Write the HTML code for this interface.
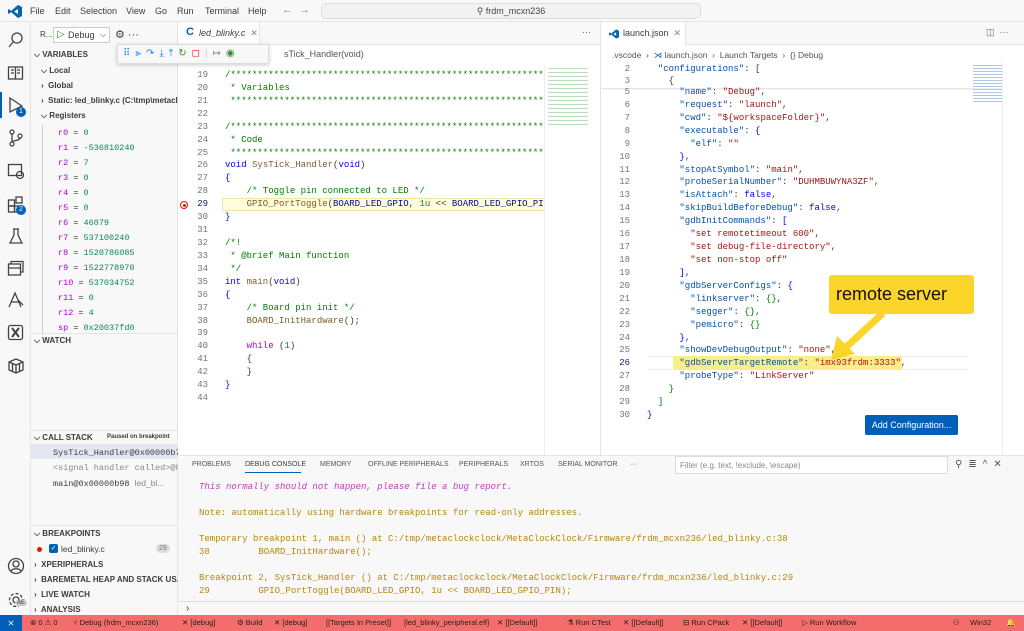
<!DOCTYPE html>
<html><head><meta charset="utf-8"><style>
*{margin:0;padding:0;box-sizing:border-box}
body{width:1024px;height:631px;overflow:hidden;background:#f8f8f8;font-family:"Liberation Sans",sans-serif;font-size:9px;color:#3b3b3b;position:relative}
.a{position:absolute;white-space:pre}
.m{font-family:"Liberation Mono",monospace;font-size:9px}
.ln{position:absolute;width:30px;text-align:right;color:#6e7681;font-family:"Liberation Mono",monospace;font-size:9px}
.c{color:#008000}.k{color:#0000ff}.f{color:#795e26}.v{color:#001080}.n{color:#098658}.s{color:#a31515}.j{color:#0451a5}.p{color:#af00db}
.hd{font-weight:bold;font-size:8px;color:#3b3b3b}
.ic{position:absolute;stroke:#424242;fill:none;stroke-width:1.3}
.mn{position:absolute;top:6px;font-size:9px}
.pt{position:absolute;top:461px;font-size:7px;color:#555;white-space:pre}
.sb{position:absolute;top:618px;font-size:7.5px;color:#222;white-space:pre}
</style></head><body>
<div class="a" style="left:0;top:0;width:1024px;height:22px;background:#f8f8f8;border-bottom:1px solid #e5e5e5"></div>
<svg class="a" style="left:8px;top:5px" width="14" height="13" viewBox="0 0 14 13"><path d="M10 0L14 2V11L10 13L3 7L1 9L0 8V5L1 4L3 6L10 0ZM10 4L6 6.5L10 9Z" fill="#0065a9"/></svg>
<span class="mn" style="left:30px">File</span><span class="mn" style="left:55px">Edit</span><span class="mn" style="left:80px">Selection</span><span class="mn" style="left:126px">View</span><span class="mn" style="left:155px">Go</span><span class="mn" style="left:177px">Run</span><span class="mn" style="left:205px">Terminal</span><span class="mn" style="left:248px">Help</span>
<div class="a" style="left:282px;top:4px;font-size:11px;color:#888">←  →</div>
<div class="a" style="left:321px;top:3px;width:380px;height:16px;border:1px solid #ddd;border-radius:5px;background:#f2f2f2;text-align:center;font-size:9px;padding-top:2px;color:#444">⚲ frdm_mcxn236</div>
<div class="a" style="left:0;top:22px;width:31px;height:593px;background:#f8f8f8;border-right:1px solid #e5e5e5"></div>
<div class="a" style="left:0;top:92px;width:2px;height:26px;background:#005fb8"></div>
<svg class="ic" style="left:7px;top:31px" width="18" height="18"><circle cx="10" cy="7" r="5"/><path d="M6 11L2 16"/></svg>
<svg class="ic" style="left:7px;top:65px" width="18" height="16"><rect x="1.5" y="2" width="14" height="12"/><path d="M8.5 2V14M4 5H7M4 8H7M10 5H13M10 8H13"/></svg>
<svg class="ic" style="left:7px;top:96px" width="18" height="18"><path d="M3 2L15 10L3 16Z"/></svg>
<div class="a" style="left:16px;top:107px;width:10px;height:10px;border-radius:5px;background:#005fb8;color:#fff;font-size:7px;text-align:center;line-height:10px">1</div>
<svg class="ic" style="left:8px;top:129px" width="16" height="18"><circle cx="4" cy="3" r="2"/><circle cx="4" cy="15" r="2"/><circle cx="12" cy="7" r="2"/><path d="M4 5V13M12 9C12 12 5 11 4 13"/></svg>
<svg class="ic" style="left:7px;top:163px" width="18" height="17"><rect x="1.5" y="1.5" width="13" height="11"/><circle cx="13" cy="12" r="3.5"/></svg>
<svg class="ic" style="left:7px;top:196px" width="18" height="18"><rect x="1.5" y="4" width="6" height="6"/><rect x="1.5" y="10" width="6" height="6"/><rect x="7.5" y="10" width="6" height="6"/><rect x="9" y="1" width="6" height="6"/></svg>
<div class="a" style="left:16px;top:205px;width:10px;height:10px;border-radius:5px;background:#005fb8;color:#fff;font-size:7px;text-align:center;line-height:10px">2</div>
<svg class="ic" style="left:8px;top:228px" width="16" height="18"><path d="M5 1H11M6 1V7L2 15H14L10 7V1"/></svg>
<svg class="ic" style="left:7px;top:259px" width="18" height="18"><rect x="1.5" y="5" width="12" height="11"/><path d="M4 5V2.5H16V13H13.5M1.5 9H13.5"/></svg>
<svg class="ic" style="left:7px;top:291px" width="18" height="18"><path d="M2 16L8 2L14 16M4 11H12M11 9L16 14"/></svg>
<svg class="ic" style="left:7px;top:324px" width="18" height="18"><rect x="1.5" y="1.5" width="14" height="14" rx="2"/><path d="M5 4L12 13M12 4L5 13" stroke-width="2"/></svg>
<svg class="ic" style="left:7px;top:357px" width="18" height="18"><path d="M2 5L9 2L16 5V13L9 16L2 13ZM2 5L9 8L16 5M9 8V16M5.5 6.5V14.5M12.5 6.5V14.5"/></svg>
<svg class="ic" style="left:7px;top:557px" width="18" height="18"><circle cx="9" cy="9" r="7.5"/><circle cx="9" cy="7" r="3"/><path d="M4 14C6 11 12 11 14 14"/></svg>
<svg class="ic" style="left:7px;top:591px" width="18" height="18"><circle cx="9" cy="9" r="3"/><circle cx="9" cy="9" r="6.5" stroke-dasharray="3 2"/></svg>
<div class="a" style="left:15px;top:600px;font-size:6px;background:#ccc;border-radius:4px;padding:0 2px">AE</div>
<div class="a" style="left:31px;top:22px;width:147px;height:593px;background:#f8f8f8;border-right:1px solid #e5e5e5"></div>
<div class="a" style="left:40px;top:30px;font-size:8px">R...</div>
<div class="a" style="left:53px;top:27px;width:57px;height:16px;border:1px solid #ccc;background:#fff"></div>
<div class="a" style="left:57px;top:29px;color:#388a34;font-size:10px">▷</div>
<div class="a" style="left:68px;top:30px;font-size:9px">Debug</div>
<div class="a" style="left:100px;top:30px;font-size:8px">⌵</div>
<div class="a" style="left:115px;top:28px;font-size:11px">⚙ ···</div>
<div class="a hd" style="left:34px;top:50px">⌵ VARIABLES</div>
<div class="a" style="left:41px;top:66px;font-size:8px;font-weight:bold">⌵ Local</div>
<div class="a" style="left:41px;top:81px;font-size:8px;font-weight:bold">›  Global</div>
<div class="a" style="left:41px;top:96px;font-size:8px;font-weight:bold;width:137px;overflow:hidden">›  Static: led_blinky.c (C:\tmp\metaclo</div>
<div class="a" style="left:41px;top:111px;font-size:8px;font-weight:bold">⌵ Registers</div>
<div class="a" style="left:42px;top:125px;width:1px;height:210px;background:#ccc"></div>
<div class="a m" style="left:58px;top:126px;line-height:15px;font-size:8.5px"><span class="p">r0</span> = <span class="n">0</span>
<span class="p">r1</span> = <span class="n">-536810240</span>
<span class="p">r2</span> = <span class="n">7</span>
<span class="p">r3</span> = <span class="n">0</span>
<span class="p">r4</span> = <span class="n">0</span>
<span class="p">r5</span> = <span class="n">0</span>
<span class="p">r6</span> = <span class="n">46079</span>
<span class="p">r7</span> = <span class="n">537100240</span>
<span class="p">r8</span> = <span class="n">1520786085</span>
<span class="p">r9</span> = <span class="n">1522778970</span>
<span class="p">r10</span> = <span class="n">537034752</span>
<span class="p">r11</span> = <span class="n">0</span>
<span class="p">r12</span> = <span class="n">4</span>
<span class="p">sp</span> = <span class="n">0x20037fd0</span></div>
<div class="a" style="left:31px;top:333px;width:147px;height:1px;background:#e5e5e5"></div>
<div class="a hd" style="left:34px;top:336px">⌵ WATCH</div>
<div class="a" style="left:31px;top:430px;width:147px;height:1px;background:#e5e5e5"></div>
<div class="a hd" style="left:34px;top:433px">⌵ CALL STACK</div>
<div class="a" style="left:107px;top:434px;font-size:6px;font-weight:bold">Paused on breakpoint</div>
<div class="a" style="left:31px;top:444px;width:147px;height:15px;background:#e4e6f1"></div>
<div class="a m" style="left:53px;top:446px;font-size:8.5px;line-height:15px;width:125px;overflow:hidden">SysTick_Handler@0x00000b7c
<span style="color:#888">&lt;signal handler called&gt;@0x</span>
main@0x00000b98 <span style="color:#888;font-family:'Liberation Sans'">led_bl...</span></div>
<div class="a" style="left:31px;top:525px;width:147px;height:1px;background:#e5e5e5"></div>
<div class="a hd" style="left:34px;top:529px">⌵ BREAKPOINTS</div>
<div class="a" style="left:37px;top:547px;width:5px;height:5px;border-radius:3px;background:#e51400"></div>
<div class="a" style="left:49px;top:544px;width:9px;height:9px;background:#005fb8;border-radius:2px;color:#fff;font-size:7px;line-height:9px;text-align:center">✓</div>
<div class="a" style="left:61px;top:544px;font-size:8.5px">led_blinky.c</div>
<div class="a" style="left:156px;top:544px;font-size:7px;background:#ddd;border-radius:6px;padding:1px 3px;color:#777">29</div>
<div class="a hd" style="left:34px;top:560px">›  XPERIPHERALS</div>
<div class="a hd" style="left:34px;top:575px;width:144px;overflow:hidden">›  BAREMETAL HEAP AND STACK US...</div>
<div class="a hd" style="left:34px;top:590px">›  LIVE WATCH</div>
<div class="a hd" style="left:34px;top:605px">›  ANALYSIS</div>
<div class="a" style="left:178px;top:22px;width:422px;height:433px;background:#fff"></div>
<div class="a" style="left:178px;top:22px;width:422px;height:23px;background:#f8f8f8;border-bottom:1px solid #e5e5e5"></div>
<div class="a" style="left:178px;top:22px;width:82px;height:24px;background:#fff;border-right:1px solid #e5e5e5"></div>
<div class="a" style="left:186px;top:26px;color:#0065a9;font-weight:bold;font-size:11px">C</div>
<div class="a" style="left:199px;top:28px;font-style:italic;font-size:9px">led_blinky.c  <span style="font-style:normal;color:#888">✕</span></div>
<div class="a" style="left:582px;top:27px;font-size:9px;color:#666">···</div>
<div class="a" style="left:284px;top:49px;font-size:9px;color:#555">sTick_Handler(void)</div>
<div class="a" style="left:117px;top:44px;width:152px;height:20px;background:#f8f8f8;border:1px solid #ddd;box-shadow:0 1px 4px rgba(0,0,0,.2)"></div>
<div class="a" style="left:123px;top:48px;font-size:10px;color:#1a85ff;letter-spacing:5px">⠿<span>⫸↷⤓⤒</span><span style="color:#388a34">↻</span><span style="color:#e51400">◻</span><span style="color:#ccc">|</span><span style="color:#888">↦</span><span style="color:#388a34">◉</span></div>
<div class="ln" style="left:178px;top:69px;line-height:12.92px;white-space:pre">19
20
21
22
23
24
25
26
27
28
<span style="color:#0b216f">29</span>
30
31
32
33
34
35
36
37
38
39
40
41
42
43
44</div>
<div class="a" style="left:222px;top:198px;width:323px;height:13px;background:#fffbdd;border:1px solid #f0e6a8"></div>
<div class="a" style="left:180px;top:201px;width:8px;height:8px;border:1px solid #e51400;border-radius:4px"></div>
<div class="a" style="left:183px;top:204px;width:3px;height:3px;background:#e51400;border-radius:2px"></div>
<div class="a m" style="left:225px;top:69px;line-height:12.92px;width:320px;overflow:hidden"><span class="c">/***********************************************************************
 * Variables
 ***********************************************************************</span>

<span class="c">/***********************************************************************
 * Code
 ***********************************************************************</span>
<span class="k">void</span> <span class="f">SysTick_Handler</span>(<span class="k">void</span>)
<span class="k">{</span>
    <span class="c">/* Toggle pin connected to LED */</span>
    <span class="f">GPIO_PortToggle</span>(<span class="v">BOARD_LED_GPIO</span>, <span class="n">1u</span> &lt;&lt; <span class="v">BOARD_LED_GPIO_PIN</span>);
<span class="k">}</span>

<span class="c">/*!
 * @brief Main function
 */</span>
<span class="k">int</span> <span class="f">main</span>(<span class="k">void</span>)
<span class="k">{</span>
    <span class="c">/* Board pin init */</span>
    <span class="f">BOARD_InitHardware</span>();

    <span class="p">while</span> (<span class="n">1</span>)
    {
    }
<span class="k">}</span></div>
<div class="a" style="left:548px;top:65px;width:40px;height:60px;opacity:.6;background:repeating-linear-gradient(#fff 0 3px,#8bc48b 3px 4px)"></div>
<div class="a" style="left:544px;top:65px;width:1px;height:390px;background:#eee"></div>
<div class="a" style="left:600px;top:22px;width:1px;height:433px;background:#e5e5e5"></div>
<div class="a" style="left:601px;top:22px;width:423px;height:433px;background:#fff"></div>
<div class="a" style="left:601px;top:22px;width:423px;height:23px;background:#f8f8f8;border-bottom:1px solid #e5e5e5"></div>
<div class="a" style="left:601px;top:22px;width:85px;height:24px;background:#fff;border-right:1px solid #e5e5e5"></div>
<svg class="a" style="left:609px;top:29px" width="10" height="10" viewBox="0 0 14 13"><path d="M10 0L14 2V11L10 13L3 7L1 9L0 8V5L1 4L3 6L10 0ZM10 4L6 6.5L10 9Z" fill="#0065a9"/></svg>
<div class="a" style="left:623px;top:28px;font-size:9px">launch.json  <span style="color:#888">✕</span></div>
<div class="a" style="left:986px;top:27px;font-size:9px;color:#666">◫  ···</div>
<div class="a" style="left:612px;top:50px;font-size:8.5px;color:#555">.vscode  ›  <span style="color:#0065a9">⋊</span> launch.json  ›  Launch Targets  ›  {} Debug</div>
<div class="ln" style="left:600px;top:63px;line-height:12.2px;white-space:pre">2
3</div>
<div class="a m" style="left:647px;top:63px;line-height:12.2px">  <span class="j">"configurations"</span>: [
    {</div>
<div class="a" style="left:601px;top:88px;width:400px;height:2px;background:linear-gradient(#ddd,#fff)"></div>
<div class="a" style="left:648px;top:356px;width:320px;height:14px;border-top:1px solid #eee;border-bottom:1px solid #eee"></div>
<div class="a" style="left:673px;top:356px;width:229px;height:14px;background:#fbed8a"></div>
<div class="ln" style="left:600px;top:86px;line-height:12.92px;white-space:pre">5
6
7
8
9
10
11
12
13
14
15
16
17
18
19
20
21
22
23
24
25
<span style="color:#0b216f">26</span>
27
28
29
30</div>
<div class="a m" style="left:647px;top:86px;line-height:12.92px">      <span class="j">"name"</span>: <span class="s">"Debug"</span>,
      <span class="j">"request"</span>: <span class="s">"launch"</span>,
      <span class="j">"cwd"</span>: <span class="s">"${workspaceFolder}"</span>,
      <span class="j">"executable"</span>: <span class="k">{</span>
        <span class="j">"elf"</span>: <span class="s">""</span>
      <span class="k">}</span>,
      <span class="j">"stopAtSymbol"</span>: <span class="s">"main"</span>,
      <span class="j">"probeSerialNumber"</span>: <span class="s">"DUHMBUWYNA3ZF"</span>,
      <span class="j">"isAttach"</span>: <span class="k">false</span>,
      <span class="j">"skipBuildBeforeDebug"</span>: <span class="k">false</span>,
      <span class="j">"gdbInitCommands"</span>: <span class="k">[</span>
        <span class="s">"set remotetimeout 600"</span>,
        <span class="s">"set debug-file-directory"</span>,
        <span class="s">"set non-stop off"</span>
      <span class="k">]</span>,
      <span class="j">"gdbServerConfigs"</span>: <span class="k">{</span>
        <span class="j">"linkserver"</span>: <span class="c">{}</span>,
        <span class="j">"segger"</span>: <span class="c">{}</span>,
        <span class="j">"pemicro"</span>: <span class="c">{}</span>
      <span class="k">}</span>,
      <span class="j">"showDevDebugOutput"</span>: <span class="s">"none"</span>,
      <span class="j">"gdbServerTargetRemote"</span>: <span class="s">"imx93frdm:3333"</span>,
      <span class="j">"probeType"</span>: <span class="s">"LinkServer"</span>
    <span class="c">}</span>
  <span class="c">]</span>
<span class="k">}</span></div>
<div class="a" style="left:973px;top:63px;width:30px;height:40px;opacity:.5;background:repeating-linear-gradient(#fff 0 2px,#5b8fd6 2px 3px)"></div>
<div class="a" style="left:1002px;top:62px;width:1px;height:393px;background:#eee"></div>
<svg class="a" style="left:825px;top:310px" width="70" height="55"><path d="M58 3L18 40" stroke="#fbd52a" stroke-width="7"/><path d="M6 50L12 26L30 44Z" fill="#fbd52a"/></svg>
<div class="a" style="left:829px;top:275px;width:145px;height:39px;background:#fbd52a;border-radius:3px"></div>
<div class="a" style="left:836px;top:284px;font-size:18px;color:#111">remote server</div>
<div class="a" style="left:865px;top:415px;width:93px;height:20px;background:#005fb8;color:#fff;font-size:9px;text-align:center;line-height:20px;border-radius:2px">Add Configuration...</div>
<div class="a" style="left:178px;top:455px;width:846px;height:160px;background:#f8f8f8;border-top:1px solid #e5e5e5"></div>
<span class="pt" style="left:192px">PROBLEMS</span>
<span class="pt" style="left:245px;color:#3b3b3b">DEBUG CONSOLE</span>
<span class="pt" style="left:320px">MEMORY</span>
<span class="pt" style="left:368px">OFFLINE PERIPHERALS</span>
<span class="pt" style="left:459px">PERIPHERALS</span>
<span class="pt" style="left:520px">XRTOS</span>
<span class="pt" style="left:558px">SERIAL MONITOR</span>
<span class="pt" style="left:630px">···</span>
<div class="a" style="left:245px;top:472px;width:56px;height:1px;background:#005fb8"></div>
<div class="a" style="left:675px;top:456px;width:273px;height:18px;background:#fff;border:1px solid #ddd;font-size:8px;color:#888;padding:4px 4px">Filter (e.g. text, !exclude, \escape)</div>
<div class="a" style="left:955px;top:459px;font-size:10px;color:#555;letter-spacing:6px">⚲≣^✕</div>
<div class="a m" style="left:199px;top:481px;line-height:13px;color:#b8860b;font-size:9px"><span style="color:#c23ac2;font-style:italic">This normally should not happen, please file a bug report.</span>

Note: automatically using hardware breakpoints for read-only addresses.

Temporary breakpoint 1, main () at C:/tmp/metaclockclock/MetaClockClock/Firmware/frdm_mcxn236/led_blinky.c:38
38         BOARD_InitHardware();

Breakpoint 2, SysTick_Handler () at C:/tmp/metaclockclock/MetaClockClock/Firmware/frdm_mcxn236/led_blinky.c:29
29         GPIO_PortToggle(BOARD_LED_GPIO, 1u &lt;&lt; BOARD_LED_GPIO_PIN);</div>
<div class="a" style="left:178px;top:601px;width:846px;height:1px;background:#ddd"></div>
<div class="a" style="left:186px;top:603px;font-size:10px">›</div>
<div class="a" style="left:0;top:615px;width:1024px;height:16px;background:#f56c6c"></div>
<div class="a" style="left:0;top:615px;width:22px;height:16px;background:#005fb8;color:#fff;font-size:9px;text-align:center;line-height:16px">⨯</div>
<span class="sb" style="left:30px">⊗ 0 ⚠ 0</span>
<span class="sb" style="left:73px">⑂ Debug (frdm_mcxn236)</span>
<span class="sb" style="left:182px">✕ [debug]</span>
<span class="sb" style="left:237px">⚙ Build</span>
<span class="sb" style="left:274px">✕ [debug]</span>
<span class="sb" style="left:326px">[[Targets In Preset]]</span>
<span class="sb" style="left:404px">[led_blinky_peripheral.elf]</span>
<span class="sb" style="left:497px">✕ [[Default]]</span>
<span class="sb" style="left:567px">⚗ Run CTest</span>
<span class="sb" style="left:623px">✕ [[Default]]</span>
<span class="sb" style="left:683px">⊟ Run CPack</span>
<span class="sb" style="left:742px">✕ [[Default]]</span>
<span class="sb" style="left:802px">▷ Run Workflow</span>
<span class="sb" style="left:953px">⚇</span>
<span class="sb" style="left:970px">Win32</span>
<span class="sb" style="left:1006px">🔔</span>
</body></html>
